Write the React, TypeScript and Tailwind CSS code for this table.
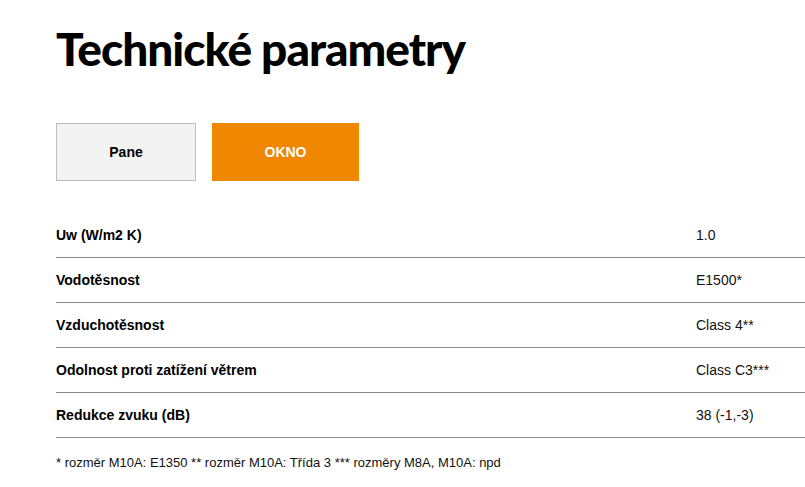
const rows = [
  { label: 'Uw (W/m2 K)', value: '1.0' },
  { label: 'Vodotěsnost', value: 'E1500*' },
  { label: 'Vzduchotěsnost', value: 'Class 4**' },
  { label: 'Odolnost proti zatížení větrem', value: 'Class C3***' },
  { label: 'Redukce zvuku (dB)', value: '38 (-1,-3)' },
];

export default function App() {
  return (
    <div className="min-h-screen bg-white pl-14 pt-[21px] text-black font-['Liberation_Sans',Arial,sans-serif]">
      <h1 className="text-[46px] leading-[56px] font-black tracking-[-1px] font-['Lato',sans-serif]">Technické parametry</h1>

      <div className="mt-[46px] flex gap-[16px]">
        <button className="w-[140px] h-[58px] bg-[#f3f3f3] border border-[#bcbcbc] text-[14px] font-bold">
          Pane
        </button>
        <button className="w-[147px] h-[58px] bg-[#f08700] text-white text-[14px] font-bold">
          OKNO
        </button>
      </div>

      <div className="mt-[32px] w-[749px]">
        {rows.map((row) => (
          <div key={row.label} className="flex h-[45px] items-center border-b border-[#8a8a8a] text-[14px]">
            <div className="w-[640px] font-bold">{row.label}</div>
            <div className="text-[#111]">{row.value}</div>
          </div>
        ))}
      </div>

      <p className="mt-[15px] text-[13px] text-[#111]">
        * rozměr M10A: E1350 ** rozměr M10A: Třída 3 *** rozměry M8A, M10A: npd
      </p>
    </div>
  );
}
